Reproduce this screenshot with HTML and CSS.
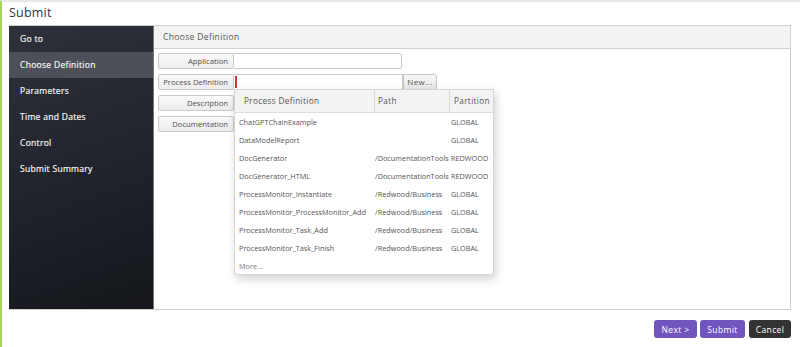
FILE: index.html
```html
<!DOCTYPE html>
<html>
<head>
<meta charset="utf-8">
<link rel="stylesheet" href="styles.css">
</head>
<body>
<div class="page">
  <h1 class="title">Submit</h1>
  <div class="wizard">
    <nav class="sidebar">
      <div class="nav-item">Go to</div>
      <div class="nav-item active">Choose Definition</div>
      <div class="nav-item">Parameters</div>
      <div class="nav-item">Time and Dates</div>
      <div class="nav-item">Control</div>
      <div class="nav-item">Submit Summary</div>
    </nav>
    <section class="content">
      <div class="content-head">Choose Definition</div>
      <div class="form">
        <div class="row">
          <div class="label">Application</div>
          <div class="input"></div>
        </div>
        <div class="row">
          <div class="label">Process Definition</div>
          <div class="input required"><span class="caret"></span></div>
          <div class="btn-new">New...</div>
          <div class="dropdown">
            <div class="dd-head">
              <div class="c1">Process Definition</div>
              <div class="c2">Path</div>
              <div class="c3">Partition</div>
            </div>
            <div class="dd-body">
              <div class="dd-row"><span class="c1">ChatGPTChainExample</span><span class="c2"></span><span class="c3">GLOBAL</span></div>
              <div class="dd-row"><span class="c1">DataModelReport</span><span class="c2"></span><span class="c3">GLOBAL</span></div>
              <div class="dd-row"><span class="c1">DocGenerator</span><span class="c2">/DocumentationTools</span><span class="c3">REDWOOD</span></div>
              <div class="dd-row"><span class="c1">DocGenerator_HTML</span><span class="c2">/DocumentationTools</span><span class="c3">REDWOOD</span></div>
              <div class="dd-row"><span class="c1">ProcessMonitor_Instantiate</span><span class="c2">/Redwood/Business</span><span class="c3">GLOBAL</span></div>
              <div class="dd-row"><span class="c1">ProcessMonitor_ProcessMonitor_Add</span><span class="c2">/Redwood/Business</span><span class="c3">GLOBAL</span></div>
              <div class="dd-row"><span class="c1">ProcessMonitor_Task_Add</span><span class="c2">/Redwood/Business</span><span class="c3">GLOBAL</span></div>
              <div class="dd-row"><span class="c1">ProcessMonitor_Task_Finish</span><span class="c2">/Redwood/Business</span><span class="c3">GLOBAL</span></div>
              <div class="dd-row more"><span class="c1">More...</span></div>
            </div>
          </div>
        </div>
        <div class="row">
          <div class="label">Description</div>
        </div>
        <div class="row">
          <div class="label">Documentation</div>
        </div>
      </div>
    </section>
  </div>
  <div class="footer">
    <button class="btn btn-primary">Next &gt;</button>
    <button class="btn btn-primary">Submit</button>
    <button class="btn btn-dark">Cancel</button>
  </div>
</div>
</body>
</html>
```
FILE: styles.css
```css
* { box-sizing: border-box; }
html, body { margin: 0; padding: 0; background: #fff; }
body {
  font-family: "Open Sans", "Noto Sans", sans-serif;
  color: #333;
  width: 800px;
  height: 347px;
  overflow: hidden;
}
.page {
  height: 347px;
  border-left: 2px solid #a6d55a;
  border-top: 2px solid #e8e8e8;
  padding: 0 9px 0 7px;
  display: flex;
  flex-direction: column;
}
.title {
  margin: 0;
  height: 23px;
  font-size: 12.5px;
  font-weight: 400;
  line-height: 22px;
  color: #333;
  letter-spacing: 0.2px;
}
.wizard {
  display: flex;
  height: 285px;
  border: 1px solid #cfcfcf;
  border-left: none;
}
.sidebar {
  width: 144px;
  flex: none;
  background: linear-gradient(160deg, #2e3139 0%, #20232b 55%, #14161b 100%);
}
.nav-item {
  height: 26px;
  line-height: 26px;
  padding-left: 11px;
  color: #f2f2f2;
  font-size: 8.5px;
  font-weight: 400;
  letter-spacing: 0.3px;
  -webkit-text-stroke: 0.2px #f2f2f2;
}
.nav-item.active {
  background: #4d5058;
}
.content {
  flex: 1;
  display: flex;
  flex-direction: column;
  border-left: 1px solid #777;
}
.content-head {
  height: 23px;
  background: #f3f3f3;
  border-bottom: 1px solid #d2d2d2;
  line-height: 22px;
  padding-left: 9px;
  font-size: 8.5px;
  color: #555;
  letter-spacing: 0.35px;
}
.form {
  padding: 4px 0 0 4px;
  display: flex;
  flex-direction: column;
  gap: 5px;
}
.row {
  display: flex;
  height: 16px;
  position: relative;
}
.label {
  width: 76px;
  height: 16px;
  border: 1px solid #cacaca;
  border-radius: 2px;
  background: linear-gradient(#fafafa, #ececec);
  font-size: 7.7px;
  color: #505050;
  text-align: right;
  padding-right: 5px;
  line-height: 14px;
}
.input {
  width: 168px;
  height: 16px;
  border: 1px solid #cacaca;
  border-left: none;
  border-radius: 0 3px 3px 0;
  background: #fff;
}
.input.required {
  width: 169px;
  border-radius: 0;
  position: relative;
}
.caret {
  position: absolute;
  left: 1px;
  top: 1px;
  width: 2px;
  height: 12px;
  background: #cc3333;
}
.btn-new {
  width: 34px;
  height: 16px;
  border: 1px solid #c4c4c4;
  border-radius: 0 3px 3px 0;
  background: linear-gradient(#f7f7f7, #e7e7e7);
  font-size: 8px;
  color: #555;
  text-align: center;
  line-height: 14px;
  letter-spacing: 0.4px;
}
.dropdown {
  position: absolute;
  left: 76px;
  top: 15px;
  width: 260px;
  height: 186px;
  background: #fff;
  border: 1px solid #d6d6d6;
  border-radius: 0 0 3px 3px;
  box-shadow: 2px 4px 10px rgba(0,0,0,0.18);
  z-index: 5;
}
.dd-head {
  display: flex;
  height: 23px;
  background: #f3f3f3;
  border-bottom: 1px solid #dedede;
  font-size: 8.2px;
  color: #555;
  letter-spacing: 0.35px;
  line-height: 22px;
}
.dd-head .c1 { width: 140px; padding-left: 9px; border-right: 1px solid #d8d8d8; }
.dd-head .c2 { width: 75px; padding-left: 3px; border-right: 1px solid #d8d8d8; }
.dd-head .c3 { flex: 1; padding-left: 4px; }
.dd-row {
  display: flex;
  height: 18px;
  line-height: 18px;
  font-size: 7.3px;
  color: #555;
  white-space: nowrap;
}
.dd-row .c1 { width: 140px; padding-left: 4px; overflow: hidden; }
.dd-row .c2 { width: 76px; overflow: hidden; }
.dd-row .c3 { flex: 1; }
.dd-row.more { color: #777; }
.footer {
  display: flex;
  justify-content: flex-end;
  gap: 3px;
  padding-top: 10px;
}
.btn {
  height: 18px;
  border: none;
  border-radius: 3px;
  color: #fff;
  font-family: "Open Sans", "Noto Sans", sans-serif;
  font-size: 8.5px;
  font-weight: 500;
  letter-spacing: 0.4px;
  padding: 0;
}
.btn-primary { background: #7055be; width: 43px; }
.btn-primary + .btn-primary { width: 45px; }
.btn-dark { background: #333; width: 42px; margin-left: 1px; }
```
